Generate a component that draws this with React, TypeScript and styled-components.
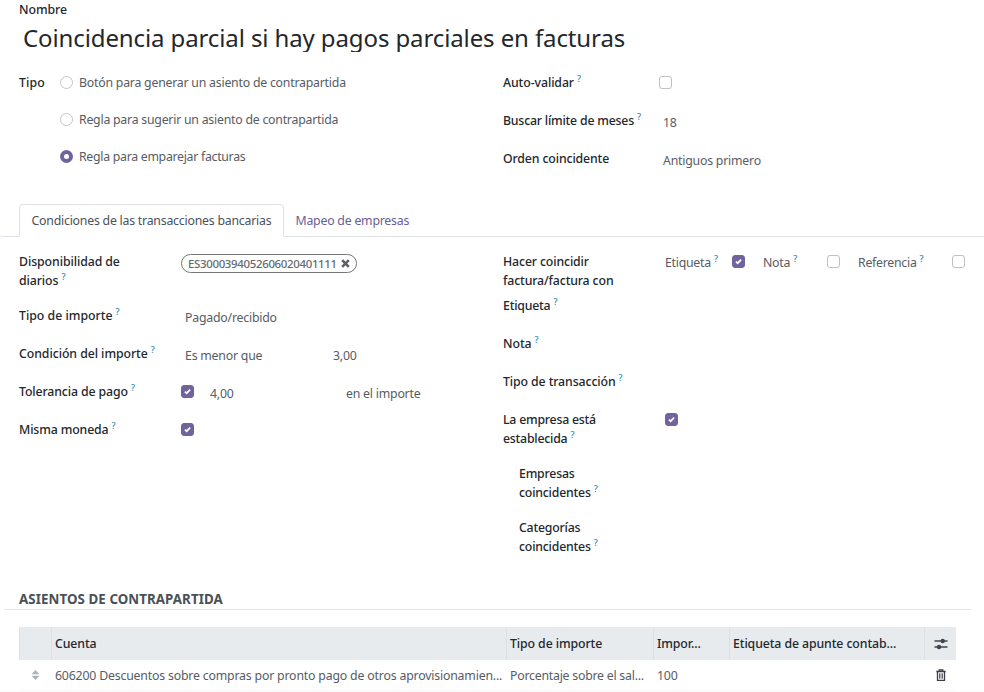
import React from "react";
import styled, { createGlobalStyle } from "styled-components";

const Global = createGlobalStyle`
  * { box-sizing: border-box; }
  body { margin: 0; background: #fff; overflow: hidden; }
`;

const Page = styled.main`
  width: 984px;
  height: 692px;
  overflow: hidden;
  font: 400 12.3px/19px "Noto Sans", "Open Sans", sans-serif;
  letter-spacing: -0.2px;
  color: #565c63;
  white-space: nowrap;
`;

const Header = styled.header`
  height: 73px;
  padding-left: 19px;
`;

const FieldName = styled.div<{ $ls?: number }>`
  font-weight: 500;
  color: #23272c;
  letter-spacing: ${(p) => p.$ls ?? -0.08}px;
`;

const Title = styled.h1`
  margin: 3px 0 0 4px;
  height: 30px;
  overflow: hidden;
  font-size: 24px;
  font-weight: 400;
  line-height: 32px;
  letter-spacing: -0.11px;
  color: #23272c;
`;

const Columns = styled.div`
  display: grid;
  grid-template-columns: 484px 1fr;
  padding-left: 19px;
`;

const TopFields = styled(Columns)`
  height: 131px;
`;

const TabFields = styled(Columns)`
  height: 339px;
  padding-top: 15px;
`;

const TypeField = styled.div`
  display: grid;
  grid-template-columns: 41px 1fr;
`;

const RadioOption = styled.label<{ $ls: number }>`
  display: flex;
  align-items: center;
  gap: 6px;
  height: 19px;
  margin-bottom: 18px;
  letter-spacing: ${(p) => p.$ls}px;
`;

const Radio = styled.span<{ $on?: boolean }>`
  width: 13px;
  height: 13px;
  border-radius: 50%;
  border: ${(p) => (p.$on ? "4px solid #71639e" : "1px solid #c3c5c8")};
  background: #fff;
`;

const Row = styled.div<{ $h?: number; $names?: number; $indent?: boolean }>`
  display: grid;
  grid-template-columns: ${(p) => p.$names ?? 162}px 1fr;
  height: ${(p) => p.$h ?? 38}px;
  margin-left: ${(p) => (p.$indent ? 16 : 0)}px;
`;

const Values = styled.div`
  display: flex;
  align-items: flex-start;
`;

const Value = styled.span<{ $w?: number }>`
  width: ${(p) => (p.$w ? `${p.$w}px` : "auto")};
  padding: 2px 0 0 4px;
  letter-spacing: -0.21px;
`;

const InlineName = styled.span<{ $w: number }>`
  width: ${(p) => p.$w}px;
  padding-top: 0.5px;
  letter-spacing: -0.25px;
`;

const Mark = styled.sup`
  margin-left: 3px;
  font-size: 9px;
  font-weight: 500;
  line-height: 0;
  vertical-align: 5px;
  color: #2d8bad;
`;

const Box = styled.span<{ $on?: boolean; $gap?: number }>`
  display: flex;
  align-items: center;
  justify-content: center;
  flex: none;
  width: 13px;
  height: 13px;
  margin: 3px ${(p) => p.$gap ?? 0}px 0 0;
  border: 1px solid ${(p) => (p.$on ? "#71639e" : "#bfc1c4")};
  border-radius: 3px;
  background: ${(p) => (p.$on ? "#71639e" : "#fff")};
`;

const Chip = styled.span`
  display: flex;
  align-items: center;
  gap: 4px;
  width: 176px;
  height: 19px;
  margin-top: 2px;
  padding-left: 6px;
  border: 1px solid #74777a;
  border-radius: 10px;
  font-size: 11.4px;
  font-weight: 500;
  line-height: 17px;
  letter-spacing: -0.3px;
  color: #66696d;
`;

const Tabs = styled.nav`
  display: flex;
  height: 33px;
  margin-left: 1px;
  padding-left: 18px;
  border-bottom: 1px solid #dee2e6;
`;

const Tab = styled.a<{ $on?: boolean }>`
  height: 33px;
  width: ${(p) => (p.$on ? "265px" : "auto")};
  padding: 6px 0 0 ${(p) => (p.$on ? 11.5 : 10.5)}px;
  border: 1px solid ${(p) => (p.$on ? "#dee2e6" : "transparent")};
  border-bottom-color: ${(p) => (p.$on ? "#fff" : "transparent")};
  border-radius: 4px 4px 0 0;
  color: ${(p) => (p.$on ? "#4b5159" : "#6a5d95")};
  letter-spacing: -0.22px;
`;

const SectionTitle = styled.h2`
  width: 967px;
  height: 34px;
  margin: 0 0 17px 4px;
  padding: 14px 0 0 15px;
  border-bottom: 1px solid #e4e6e8;
  font-size: 13.3px;
  font-weight: 700;
  letter-spacing: 0.09px;
  color: #495057;
`;

const Table = styled.div`
  width: 937px;
  margin-left: 19px;
`;

const TableRow = styled.div`
  display: grid;
  grid-template-columns: 32px 455px 147px 76px 195px 32px;
  height: 31px;
  border-bottom: 1px solid #f7f8f9;
`;

const TableHead = styled(TableRow)`
  height: 33px;
  background: #e8ebee;
  border: 0;
`;

const HeadCell = styled.div<{ $icon?: boolean }>`
  display: flex;
  align-items: center;
  justify-content: ${(p) => (p.$icon ? "center" : "flex-start")};
  padding-left: ${(p) => (p.$icon ? 0 : 3)}px;
  border-left: 1px solid #dde1e5;
  font-weight: 500;
  letter-spacing: -0.09px;
  color: #23272c;
`;

const Cell = styled.div<{ $icon?: boolean; $ls?: number }>`
  display: flex;
  align-items: center;
  justify-content: ${(p) => (p.$icon ? "center" : "flex-start")};
  padding: ${(p) => (p.$icon ? "0 0 0 1px" : "1px 0 0 4px")};
  letter-spacing: ${(p) => p.$ls ?? -0.2}px;
`;

const Footer = styled.div`
  height: 2px;
  background: #fbfbfc;
`;

const Check = ({ on, gap }: { on?: boolean; gap?: number }) => (
  <Box $on={on} $gap={gap}>
    {on && (
      <svg width="9" height="9" viewBox="0 0 9 9" fill="none">
        <path d="M1.9 4.6 3.7 6.2 7.1 2.7" stroke="#fff" strokeWidth="1.7" />
      </svg>
    )}
  </Box>
);

const Name = ({ lines, help = true, ls }: { lines: string[]; help?: boolean; ls?: number }) => (
  <FieldName $ls={ls}>
    {lines.map((line, i) => (
      <div key={line}>
        {line}
        {help && i === lines.length - 1 && <Mark>?</Mark>}
      </div>
    ))}
  </FieldName>
);

export default function App() {
  return (
    <Page>
      <Global />
      <Header>
        <FieldName>Nombre</FieldName>
        <Title>Coincidencia parcial si hay pagos parciales en facturas</Title>
      </Header>

      <TopFields>
        <TypeField>
          <FieldName $ls={0.15}>Tipo</FieldName>
          <div>
            <RadioOption $ls={-0.22}><Radio />Botón para generar un asiento de contrapartida</RadioOption>
            <RadioOption $ls={-0.23}><Radio />Regla para sugerir un asiento de contrapartida</RadioOption>
            <RadioOption $ls={-0.28}><Radio $on />Regla para emparejar facturas</RadioOption>
          </div>
        </TypeField>
        <div>
          <Row $names={156}><Name lines={["Auto-validar"]} /><Values><Check /></Values></Row>
          <Row $names={156}><Name lines={["Buscar límite de meses"]} ls={-0.2} /><Values><Value>18</Value></Values></Row>
          <Row $names={156}><Name lines={["Orden coincidente"]} help={false} ls={-0.13} /><Values><Value>Antiguos primero</Value></Values></Row>
        </div>
      </TopFields>

      <Tabs>
        <Tab $on>Condiciones de las transacciones bancarias</Tab>
        <Tab>Mapeo de empresas</Tab>
      </Tabs>

      <TabFields>
        <div>
          <Row $h={54}>
            <Name lines={["Disponibilidad de", "diarios"]} />
            <Chip>
              ES3000394052606020401111
              <svg width="9" height="9" viewBox="0 0 9 9">
                <path d="M1.2 1.2 7.8 7.8M7.8 1.2 1.2 7.8" stroke="#5c5f63" strokeWidth="2.6" />
              </svg>
            </Chip>
          </Row>
          <Row><Name lines={["Tipo de importe"]} ls={0} /><Values><Value>Pagado/recibido</Value></Values></Row>
          <Row><Name lines={["Condición del importe"]} ls={-0.06} /><Values><Value $w={148}>Es menor que</Value><Value>3,00</Value></Values></Row>
          <Row><Name lines={["Tolerancia de pago"]} ls={-0.11} /><Values><Check on gap={12} /><Value $w={136}>4,00</Value><Value>en el importe</Value></Values></Row>
          <Row><Name lines={["Misma moneda"]} ls={-0.13} /><Values><Check on /></Values></Row>
        </div>
        <div>
          <Row $h={44}>
            <Name lines={["Hacer coincidir", "factura/factura con"]} help={false} ls={-0.13} />
            <Values>
              <InlineName $w={67}>Etiqueta<Mark>?</Mark></InlineName><Check on gap={18} />
              <InlineName $w={64}>Nota<Mark>?</Mark></InlineName><Check gap={18} />
              <InlineName $w={94}>Referencia<Mark>?</Mark></InlineName><Check />
            </Values>
          </Row>
          <Row><Name lines={["Etiqueta"]} ls={-0.2} /></Row>
          <Row><Name lines={["Nota"]} /></Row>
          <Row><Name lines={["Tipo de transacción"]} ls={-0.1} /></Row>
          <Row $h={54}><Name lines={["La empresa está", "establecida"]} ls={-0.22} /><Values><Check on /></Values></Row>
          <Row $h={54} $indent><Name lines={["Empresas", "coincidentes"]} ls={-0.2} /></Row>
          <Row $h={54} $indent><Name lines={["Categorías", "coincidentes"]} ls={-0.2} /></Row>
        </div>
      </TabFields>

      <SectionTitle>ASIENTOS DE CONTRAPARTIDA</SectionTitle>
      <Table>
        <TableHead>
          <HeadCell />
          <HeadCell>Cuenta</HeadCell>
          <HeadCell>Tipo de importe</HeadCell>
          <HeadCell>Impor...</HeadCell>
          <HeadCell>Etiqueta de apunte contab...</HeadCell>
          <HeadCell $icon>
            <svg width="14" height="12" viewBox="0 0 14 12" fill="#3f454c">
              <path d="M0.5 3h13M0.5 9h13" stroke="#3f454c" strokeWidth="1.3" />
              <circle cx="8.7" cy="3" r="2.2" />
              <circle cx="5" cy="9" r="2.2" />
            </svg>
          </HeadCell>
        </TableHead>
        <TableRow>
          <Cell $icon>
            <svg width="9" height="10" viewBox="0 0 8 10" fill="#adb3ba">
              <path d="M0 4.2 4 0 8 4.2zM0 5.8h8L4 10z" />
            </svg>
          </Cell>
          <Cell $ls={-0.18}>606200 Descuentos sobre compras por pronto pago de otros aprovisionamien...</Cell>
          <Cell $ls={-0.23}>Porcentaje sobre el sal...</Cell>
          <Cell>100</Cell>
          <Cell />
          <Cell $icon>
            <svg width="10" height="12" viewBox="0 0 10 12" fill="none" stroke="#3f3d4a">
              <path d="M0.3 2.5h9.4M3.2 2.2V0.8h3.6v1.4M1.5 3v8.3h7V3" strokeWidth="1.3" />
              <path d="M3.5 4.3v5.4M5 4.3v5.4M6.5 4.3v5.4" strokeWidth="0.8" />
            </svg>
          </Cell>
        </TableRow>
      </Table>
      <Footer />
    </Page>
  );
}
